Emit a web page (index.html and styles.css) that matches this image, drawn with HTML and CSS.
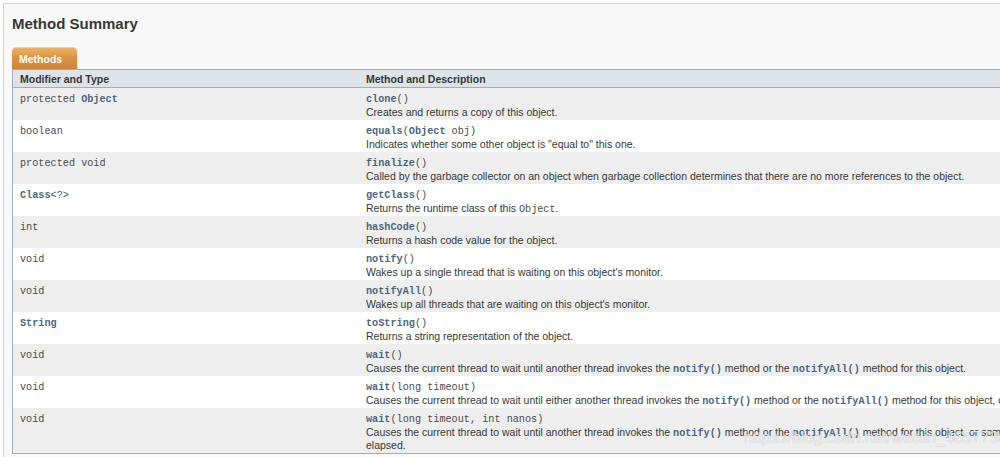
FILE: index.html
```html
<!DOCTYPE html>
<html lang="en">
<head>
<meta charset="utf-8">
<title>Method Summary</title>
<link rel="stylesheet" href="styles.css">
</head>
<body>
<div class="block">
  <h3 class="title">Method Summary</h3>
  <div class="tab">Methods</div>
  <table class="summary">
    <colgroup><col class="c1"><col class="c2"></colgroup>
    <thead>
      <tr><th>Modifier and Type</th><th>Method and Description</th></tr>
    </thead>
    <tbody>
      <tr class="alt">
        <td><code>protected <a class="lnk">Object</a></code></td>
        <td><div class="sig"><code><a class="lnk">clone</a>()</code></div><div class="desc">Creates and returns a copy of this object.</div></td>
      </tr>
      <tr>
        <td><code>boolean</code></td>
        <td><div class="sig"><code><a class="lnk">equals</a>(<a class="lnk">Object</a>&nbsp;obj)</code></div><div class="desc">Indicates whether some other object is "equal to" this one.</div></td>
      </tr>
      <tr class="alt">
        <td><code>protected void</code></td>
        <td><div class="sig"><code><a class="lnk">finalize</a>()</code></div><div class="desc">Called by the garbage collector on an object when garbage collection determines that there are no more references to the object.</div></td>
      </tr>
      <tr>
        <td><code><a class="lnk">Class</a>&lt;?&gt;</code></td>
        <td><div class="sig"><code><a class="lnk">getClass</a>()</code></div><div class="desc">Returns the runtime class of this <code>Object</code>.</div></td>
      </tr>
      <tr class="alt">
        <td><code>int</code></td>
        <td><div class="sig"><code><a class="lnk">hashCode</a>()</code></div><div class="desc">Returns a hash code value for the object.</div></td>
      </tr>
      <tr>
        <td><code>void</code></td>
        <td><div class="sig"><code><a class="lnk">notify</a>()</code></div><div class="desc">Wakes up a single thread that is waiting on this object's monitor.</div></td>
      </tr>
      <tr class="alt">
        <td><code>void</code></td>
        <td><div class="sig"><code><a class="lnk">notifyAll</a>()</code></div><div class="desc">Wakes up all threads that are waiting on this object's monitor.</div></td>
      </tr>
      <tr>
        <td><code><a class="lnk">String</a></code></td>
        <td><div class="sig"><code><a class="lnk">toString</a>()</code></div><div class="desc">Returns a string representation of the object.</div></td>
      </tr>
      <tr class="alt">
        <td><code>void</code></td>
        <td><div class="sig"><code><a class="lnk">wait</a>()</code></div><div class="desc">Causes the current thread to wait until another thread invokes the <a class="lnk"><code>notify()</code></a> method or the <a class="lnk"><code>notifyAll()</code></a> method for this object.</div></td>
      </tr>
      <tr>
        <td><code>void</code></td>
        <td><div class="sig"><code><a class="lnk">wait</a>(long&nbsp;timeout)</code></div><div class="desc">Causes the current thread to wait until either another thread invokes the <a class="lnk"><code>notify()</code></a> method or the <a class="lnk"><code>notifyAll()</code></a> method for this object, or a specified amount of time has elapsed.</div></td>
      </tr>
      <tr class="alt">
        <td><code>void</code></td>
        <td><div class="sig"><code><a class="lnk">wait</a>(long&nbsp;timeout, int&nbsp;nanos)</code></div><div class="desc">Causes the current thread to wait until another thread invokes the <a class="lnk"><code>notify()</code></a> method or the <a class="lnk"><code>notifyAll()</code></a> method for this object, or some other thread interrupts the current thread, or a certain amount of real time has<br>elapsed.</div></td>
      </tr>
    </tbody>
  </table>
</div>
<div class="watermark">https://blog.csdn.net/weixin_46577306</div>
</body>
</html>
```

FILE: styles.css
```css
html, body {
  margin: 0;
  padding: 0;
  background: #ffffff;
  overflow: hidden;
  width: 1000px;
  height: 457px;
}

body {
  position: relative;
  font-family: "Liberation Sans", Arial, Helvetica, sans-serif;
  color: #353833;
}

.block {
  margin: 3px 0 0 3px;
  width: 1100px;
  height: 453px;
  overflow: hidden;
  border: 1px solid #cdd4de;
  background: #f8f8f8;
  padding: 0 0 0 8px;
}

.title {
  margin: 0;
  padding-top: 11px;
  font-size: 15px;
  line-height: 18px;
  font-weight: bold;
  color: #353833;
}

.tab {
  margin-top: 14px;
  display: inline-block;
  vertical-align: top;
  height: 14px;
  padding: 5px 15px 3px 7px;
  font-size: 10.5px;
  line-height: 14px;
  font-weight: bold;
  color: #ffffff;
  background: linear-gradient(#f0b56c, #dc9444 45%, #cf8535);
  border-radius: 4px 4px 0 0;
  box-shadow: inset 0 1px 0 rgba(255, 255, 255, 0.35);
}

.summary {
  table-layout: fixed;
  width: 1300px;
  border-collapse: separate;
  border-spacing: 0;
  border-left: 1px solid #9eadc0;
  border-bottom: 1px solid #9eadc0;
  font-size: 10.5px;
  line-height: 14px;
}

.c1 { width: 346px; }

.summary th {
  text-align: left;
  font-weight: bold;
  white-space: nowrap;
  background: #dee3e9;
  border-top: 1px solid #9eadc0;
  border-bottom: 1px solid #9eadc0;
  padding: 2px 3px 1px 7px;
  color: #353833;
}

.summary td {
  vertical-align: top;
  white-space: nowrap;
  padding: 3px 3px 1px 7px;
  background: #ffffff;
}

.summary tr.alt td {
  background: #eeeeef;
}

code {
  font-family: "Liberation Mono", "Courier New", monospace;
  font-size: 10.2px;
  line-height: 8px;
  color: #4c4c4c;
}

.lnk {
  color: #4a6782;
  font-weight: bold;
  text-decoration: none;
}

.lnk code {
  color: #4a6782;
  font-weight: bold;
}

.sig, .desc {
  height: 14px;
  line-height: 14px;
}

.desc {
  color: #353833;
}

.summary tr:last-child .desc {
  height: auto;
  line-height: 13px;
  padding-top: 1px;
}

.watermark {
  position: absolute;
  left: 744px;
  top: 428px;
  font-family: "Liberation Sans", Arial, sans-serif;
  font-size: 16px;
  line-height: 20px;
  color: rgba(255, 255, 255, 0.75);
  text-shadow: 0 0 1px rgba(0, 0, 0, 0.28);
  white-space: nowrap;
}
```
